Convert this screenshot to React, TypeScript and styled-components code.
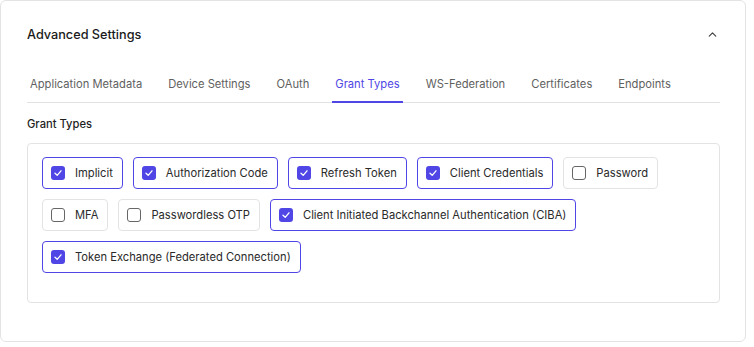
import { useState } from "react";
import { ChevronUp } from "lucide-react";
import styled, { createGlobalStyle } from "styled-components";

const GlobalStyle = createGlobalStyle`
  body {
    margin: 0;
    background: #ffffff;
    font-family: Inter, "Noto Sans", sans-serif;
    color: #1f1f1f;
  }
`;

const tabs = [
  "Application Metadata",
  "Device Settings",
  "OAuth",
  "Grant Types",
  "WS-Federation",
  "Certificates",
  "Endpoints",
];

const initialGrants = [
  { id: "implicit", label: "Implicit", checked: true },
  { id: "auth_code", label: "Authorization Code", checked: true },
  { id: "refresh", label: "Refresh Token", checked: true },
  { id: "client_cred", label: "Client Credentials", checked: true },
  { id: "password", label: "Password", checked: false },
  { id: "mfa", label: "MFA", checked: false },
  { id: "otp", label: "Passwordless OTP", checked: false },
  { id: "ciba", label: "Client Initiated Backchannel Authentication (CIBA)", checked: true },
  { id: "token_exchange", label: "Token Exchange (Federated Connection)", checked: true },
];

const App = () => {
  const [active, setActive] = useState("Grant Types");
  const [grants, setGrants] = useState(initialGrants);

  const toggle = (id: string) => {
    setGrants((prev) =>
      prev.map((g) => (g.id === id ? { ...g, checked: !g.checked } : g))
    );
  };

  return (
    <>
      <GlobalStyle />
      <Card>
        <Header>
          <Title>Advanced Settings</Title>
          <ChevronUp size={13} strokeWidth={2.2} color="#444" />
        </Header>
        <TabBar>
          {tabs.map((t) => (
            <Tab key={t} $active={t === active} onClick={() => setActive(t)}>
              {t}
            </Tab>
          ))}
        </TabBar>
        <SectionLabel>Grant Types</SectionLabel>
        <GrantBox>
          {grants.map((g) => (
            <Chip key={g.id} $checked={g.checked} onClick={() => toggle(g.id)}>
              <Box $checked={g.checked}>
                {g.checked && (
                  <svg width="10" height="10" viewBox="0 0 10 10">
                    <polyline
                      points="2,5.3 4.2,7.3 8,2.8"
                      fill="none"
                      stroke="#fff"
                      strokeWidth="1.3"
                      strokeLinecap="round"
                      strokeLinejoin="round"
                    />
                  </svg>
                )}
              </Box>
              {g.label}
            </Chip>
          ))}
        </GrantBox>
      </Card>
    </>
  );
};

export default App;

const Card = styled.div`
  box-sizing: border-box;
  width: 746px;
  height: 342px;
  border: 1px solid #e3e3e3;
  border-radius: 6px;
  padding: 0 25px 0 26px;
`;

const Header = styled.div`
  height: 66px;
  display: flex;
  align-items: center;
  justify-content: space-between;
  padding-right: 1px;
`;

const Title = styled.h2`
  margin: 0;
  font-size: 12.7px;
  font-weight: 500;
  color: #1a1a1a;
`;

const TabBar = styled.div`
  display: flex;
  gap: 20px;
  border-bottom: 1px solid #e2e2e2;
`;

const Tab = styled.button<{ $active: boolean }>`
  background: none;
  border: none;
  border-bottom: 2px solid ${(p) => (p.$active ? "#4f46e5" : "transparent")};
  margin-bottom: -1px;
  padding: 9px 3px 9px;
  font-family: inherit;
  font-size: 11.2px;
  line-height: 16px;
  color: ${(p) => (p.$active ? "#4f46e5" : "#5f5f5f")};
  cursor: pointer;
`;

const SectionLabel = styled.div`
  margin-top: 13px;
  font-size: 11.2px;
  font-weight: 500;
  line-height: 16px;
  color: #1f1f1f;
`;

const GrantBox = styled.div`
  margin-top: 11px;
  box-sizing: border-box;
  height: 160px;
  border: 1px solid #e3e3e3;
  border-radius: 4px;
  padding: 13px 14px;
  display: flex;
  flex-wrap: wrap;
  align-content: flex-start;
  gap: 10px 10px;
`;

const Chip = styled.label<{ $checked: boolean }>`
  box-sizing: border-box;
  height: 32px;
  display: flex;
  align-items: center;
  gap: 10px;
  padding: 0 9px 0 8px;
  border: ${(p) => (p.$checked ? "1.5px solid #4f46e5" : "1px solid #e3e3e3")};
  border-radius: 4px;
  font-size: 11.2px;
  color: #2a2a2a;
  cursor: pointer;
  user-select: none;
`;

const Box = styled.span<{ $checked: boolean }>`
  box-sizing: border-box;
  width: 14px;
  height: 14px;
  border-radius: 3px;
  display: flex;
  align-items: center;
  justify-content: center;
  background: ${(p) => (p.$checked ? "#4f46e5" : "#fff")};
  border: ${(p) => (p.$checked ? "none" : "1.5px solid #666")};
`;
